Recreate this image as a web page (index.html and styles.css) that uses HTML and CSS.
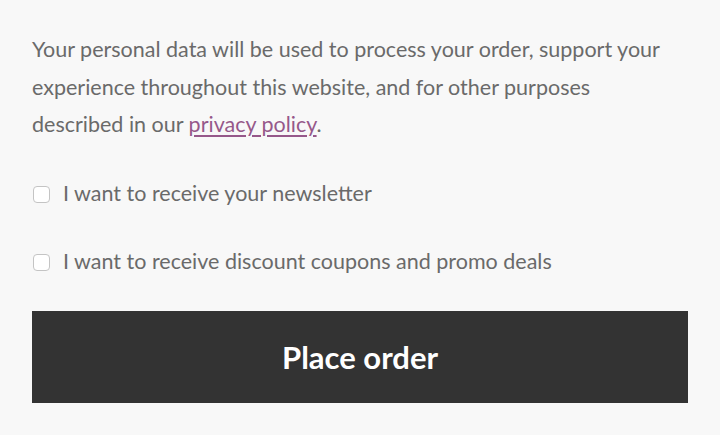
FILE: index.html
```html
<!DOCTYPE html>
<html lang="en">
<head>
<meta charset="utf-8">
<title>Checkout</title>
<link rel="stylesheet" href="styles.css">
</head>
<body>
<form class="checkout">
  <p class="privacy">Your personal data will be used to process your order, support your experience throughout this website, and for other purposes described in our <a href="#" class="link">privacy policy</a>.</p>
  <label class="check-row"><input type="checkbox" class="check"><span>I want to receive your newsletter</span></label>
  <label class="check-row"><input type="checkbox" class="check"><span>I want to receive discount coupons and promo deals</span></label>
  <button type="button" class="place-order">Place order</button>
</form>
</body>
</html>
```
FILE: styles.css
```css
html, body {
  margin: 0;
  padding: 0;
  background: #f8f8f8;
}
body {
  font-family: "Lato", "Open Sans", sans-serif;
  color: #6a6a6a;
}
.checkout {
  display: flex;
  flex-direction: column;
  gap: 31px;
  padding: 31px 32px 0 32px;
}
.privacy {
  margin: 0;
  max-width: 640px;
  font-size: 21.5px;
  line-height: 37.5px;
}
.link {
  color: #96588a;
  text-decoration: underline;
  text-underline-offset: 3px;
}
.check-row {
  display: flex;
  align-items: center;
  gap: 13px;
  font-size: 21.5px;
  line-height: 37px;
}
.check {
  appearance: none;
  -webkit-appearance: none;
  margin: 2px 0 0 1px;
  width: 17px;
  height: 17px;
  border: 1px solid #c4c4c4;
  border-radius: 4px;
  background: #fff;
  box-sizing: border-box;
}
.place-order {
  height: 92px;
  border: 0;
  background: #333333;
  color: #ffffff;
  font-family: "Lato", "Open Sans", sans-serif;
  font-weight: 700;
  font-size: 31px;
}
```
